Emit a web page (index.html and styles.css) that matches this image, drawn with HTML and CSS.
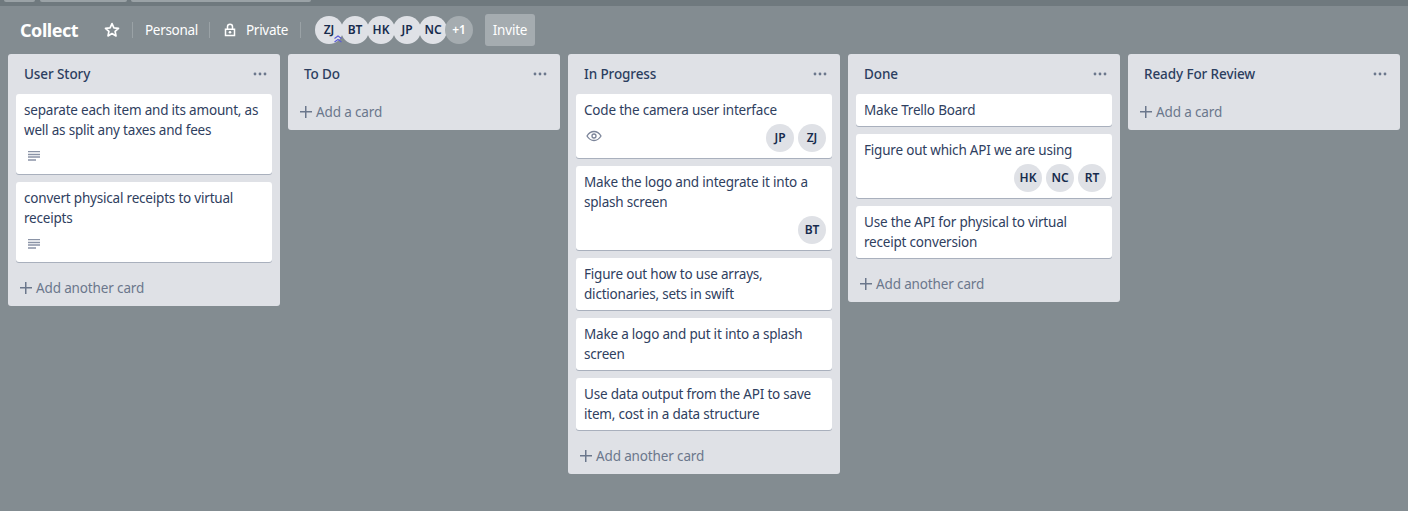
FILE: index.html
```html
<!DOCTYPE html>
<html lang="en">
<head>
<meta charset="utf-8">
<title>Collect</title>
<link rel="stylesheet" href="styles.css">
</head>
<body>
<div class="topstrip"><span class="tab t1"></span><span class="tab t2"></span><span class="tab t3"></span></div>
<header class="boardbar">
  <h1 class="title">Collect</h1>
  <svg class="star" viewBox="0 0 16 16" width="16" height="16"><path d="M8 1.600l1.900 4.200 4.600.5-3.400 3.100.9 4.500L8 11.600l-4 2.300.9-4.500L1.500 6.300l4.600-.5z" fill="none" stroke="#fff" stroke-width="1.700" stroke-linejoin="round"/></svg>
  <span class="div d1"></span>
  <span class="barlabel personal">Personal</span>
  <span class="div d2"></span>
  <svg class="lock" viewBox="0 0 12 14" width="12" height="14"><path d="M3.500 6V3.800a2.500 2.500 0 0 1 5 0V6" fill="none" stroke="#fff" stroke-width="1.500"/><path d="M1.500 6.200h9v6.300h-9z" fill="none" stroke="#fff" stroke-width="1.500"/><circle cx="6" cy="9.300" r="1.300" fill="#fff"/></svg>
  <span class="barlabel private">Private</span>
  <span class="div d3"></span>
  <div class="members">
    <span class="av head zj">ZJ<svg class="chev" viewBox="0 0 10 8" width="10" height="8"><path d="M1.500 3.500L5 1l3.500 2.500M1.500 7L5 4.500 8.500 7" fill="none" stroke="#5a5ad6" stroke-width="1.100"/></svg></span>
    <span class="av head">BT</span>
    <span class="av head">HK</span>
    <span class="av head">JP</span>
    <span class="av head">NC</span>
    <span class="av head more">+1</span>
  </div>
  <button class="invite">Invite</button>
</header>
<main class="board">
  <section class="list">
    <div class="listhead"><h2>User Story</h2><svg class="dots" viewBox="0 0 14 4" width="14" height="4"><circle cx="2" cy="2" r="1.400"/><circle cx="7" cy="2" r="1.400"/><circle cx="12" cy="2" r="1.400"/></svg></div>
    <div class="cards">
      <article class="card"><p>separate each item and its amount, as well as split any taxes and fees</p>
        <div class="meta"><svg class="desc" viewBox="0 0 12 10" width="12" height="10"><path d="M0 .5h12M0 3.500h12M0 6h12M0 9h8" stroke="#8a93a6" stroke-width="1.300"/></svg></div></article>
      <article class="card"><p>convert physical receipts to virtual receipts</p>
        <div class="meta"><svg class="desc" viewBox="0 0 12 10" width="12" height="10"><path d="M0 .5h12M0 3.500h12M0 6h12M0 9h8" stroke="#8a93a6" stroke-width="1.300"/></svg></div></article>
    </div>
    <div class="add"><span class="plus"></span>Add another card</div>
  </section>
  <section class="list">
    <div class="listhead"><h2>To Do</h2><svg class="dots" viewBox="0 0 14 4" width="14" height="4"><circle cx="2" cy="2" r="1.400"/><circle cx="7" cy="2" r="1.400"/><circle cx="12" cy="2" r="1.400"/></svg></div>
    <div class="add"><span class="plus"></span>Add a card</div>
  </section>
  <section class="list">
    <div class="listhead"><h2>In Progress</h2><svg class="dots" viewBox="0 0 14 4" width="14" height="4"><circle cx="2" cy="2" r="1.400"/><circle cx="7" cy="2" r="1.400"/><circle cx="12" cy="2" r="1.400"/></svg></div>
    <div class="cards">
      <article class="card"><p>Code the camera user interface</p>
        <div class="meta members-row"><svg class="eye" viewBox="0 0 16 12" width="16" height="12"><path d="M1 6c1.800-3 4.200-4.500 7-4.500S13.200 3 15 6c-1.800 3-4.200 4.500-7 4.500S2.800 9 1 6z" fill="none" stroke="#7b8499" stroke-width="1.300"/><circle cx="8" cy="6" r="2" fill="none" stroke="#7b8499" stroke-width="1.300"/></svg><span class="spacer"></span><span class="av">JP</span><span class="av">ZJ</span></div></article>
      <article class="card"><p>Make the logo and integrate it into a splash screen</p>
        <div class="meta members-row"><span class="spacer"></span><span class="av">BT</span></div></article>
      <article class="card"><p>Figure out how to use arrays, dictionaries, sets in swift</p></article>
      <article class="card"><p>Make a logo and put it into a splash screen</p></article>
      <article class="card"><p>Use data output from the API to save item, cost in a data structure</p></article>
    </div>
    <div class="add"><span class="plus"></span>Add another card</div>
  </section>
  <section class="list">
    <div class="listhead"><h2>Done</h2><svg class="dots" viewBox="0 0 14 4" width="14" height="4"><circle cx="2" cy="2" r="1.400"/><circle cx="7" cy="2" r="1.400"/><circle cx="12" cy="2" r="1.400"/></svg></div>
    <div class="cards">
      <article class="card"><p>Make Trello Board</p></article>
      <article class="card"><p>Figure out which API we are using</p>
        <div class="meta members-row"><span class="spacer"></span><span class="av">HK</span><span class="av">NC</span><span class="av">RT</span></div></article>
      <article class="card"><p>Use the API for physical to virtual receipt conversion</p></article>
    </div>
    <div class="add"><span class="plus"></span>Add another card</div>
  </section>
  <section class="list">
    <div class="listhead"><h2>Ready For Review</h2><svg class="dots" viewBox="0 0 14 4" width="14" height="4"><circle cx="2" cy="2" r="1.400"/><circle cx="7" cy="2" r="1.400"/><circle cx="12" cy="2" r="1.400"/></svg></div>
    <div class="add"><span class="plus"></span>Add a card</div>
  </section>
</main>
</body>
</html>
```

FILE: styles.css
```css
* { box-sizing: border-box; }
html, body { height: 100%; }
body {
  margin: 0;
  background: #838c91;
  font-family: "Noto Sans", "Open Sans", sans-serif;
  font-size: 13.5px;
  line-height: 20px;
  color: #172b4d;
  overflow: hidden;
}
.topstrip {
  height: 6px;
  background: #6f797e;
  display: flex;
  gap: 5px;
  padding-left: 4px;
  align-items: flex-start;
}
.tab { display: block; height: 2px; background: #9aa2a6; border-radius: 0 0 3px 3px; }
.t1 { width: 31px; }
.t2 { width: 87px; }
.t3 { width: 180px; margin-left: -1px; }

.boardbar {
  height: 48px;
  display: flex;
  align-items: center;
  padding-left: 20px;
  color: #fff;
}
.title { margin: 0; font-size: 18px; font-weight: 700; line-height: 32px; width: 84px; letter-spacing: -.45px; }
.star { display: block; flex: none; }
.div { width: 1px; height: 16px; background: #9aa2a6; flex: none; }
.d1 { margin: 0 12px; }
.personal { width: 52px; }
.d2 { margin: 0 14px 0 12px; }
.barlabel { font-size: 13.5px; white-space: nowrap; letter-spacing: -.3px; }
.lock { display: block; flex: none; margin-right: 10px; }
.private { width: 42px; }
.d3 { margin: 0 14px 0 12px; }
.members { display: flex; }
.av {
  position: relative;
  flex: none;
  width: 28px;
  height: 28px;
  border-radius: 50%;
  background: #dfe1e6;
  color: #172b4d;
  font-size: 12px;
  font-weight: 600;
  line-height: 28px;
  text-align: center;
}
.head { margin-right: -2px; }
.more { background: #a5acb0; color: #fff; margin-right: 0; }
.chev { position: absolute; right: 0; bottom: 1px; display: block; }
.invite {
  margin-left: 12px;
  width: 50px;
  height: 32px;
  padding: 0;
  border: 0;
  border-radius: 3px;
  background: #a5acb0;
  color: #fff;
  font: inherit;
  letter-spacing: -.2px;
}

.board { display: flex; align-items: flex-start; gap: 8px; padding-left: 8px; }
.list {
  flex: none;
  width: 272px;
  background: #dfe1e6;
  border-radius: 3px;
  padding: 0 8px;
}
.listhead {
  height: 40px;
  display: flex;
  align-items: center;
  justify-content: space-between;
  padding: 0 5px 0 8px;
}
.listhead h2 { margin: 0; font-size: 13.5px; font-weight: 500; color: #2c3e5f; letter-spacing: -.1px; }
.dots { display: block; fill: #6b778c; }
.cards { display: flex; flex-direction: column; gap: 8px; margin-bottom: 8px; }
.card {
  background: #fff;
  border-radius: 3px;
  box-shadow: 0 1px 0 rgba(9, 30, 66, .25);
  padding: 6px 8px;
}
.card p { margin: 0; letter-spacing: -.2px; color: #2f4060; }
.meta { margin-top: 4px; min-height: 24px; display: flex; align-items: center; }
.members-row { margin-right: -2px; gap: 4px; }
.spacer { flex: 1; }
.desc { display: block; margin-left: 4px; }
.eye { display: block; margin-left: 2px; margin-bottom: 4px; }
.add {
  height: 36px;
  padding-left: 4px;
  display: flex;
  align-items: center;
  color: #6b778c;
  letter-spacing: -.14px;
}
.plus { width: 12px; height: 12px; margin-right: 4px; flex: none;
  background: linear-gradient(#6b778c, #6b778c) center / 12px 1.500px no-repeat, linear-gradient(#6b778c, #6b778c) center / 1.500px 12px no-repeat; }
```
